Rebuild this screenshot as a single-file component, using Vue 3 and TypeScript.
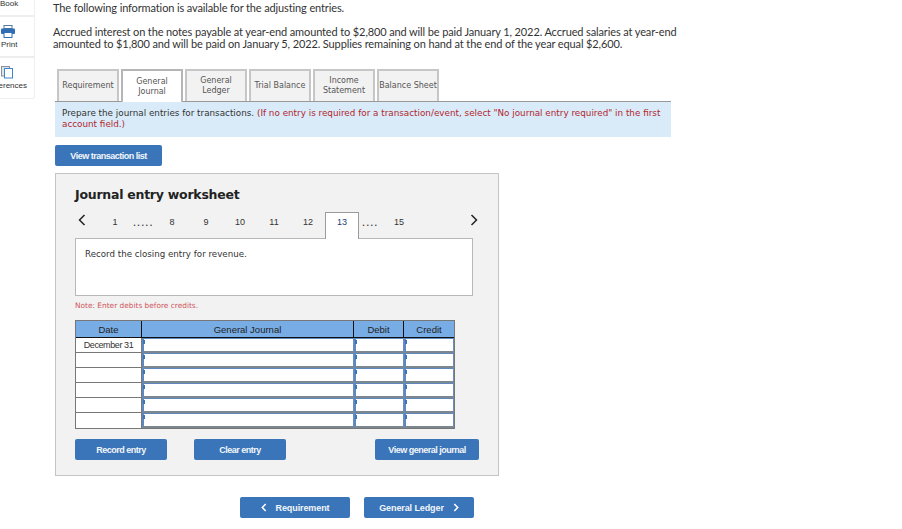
<script setup lang="ts">
const tabs = [
  { label: 'Requirement', active: false },
  { label: 'General Journal', active: true },
  { label: 'General Ledger', active: false },
  { label: 'Trial Balance', active: false },
  { label: 'Income Statement', active: false },
  { label: 'Balance Sheet', active: false },
]
const rows = ['December 31', '', '', '', '', '']
</script>

<template>
  <div class="page">
    <aside class="side">
      <div class="card book"><span class="clip">Book</span></div>
      <div class="card">
        <svg width="14" height="13" viewBox="0 0 14 13" class="ico">
          <rect x="3" y="0.5" width="8" height="3" fill="#fff" stroke="#55789f" />
          <rect x="0" y="3.5" width="14" height="5.5" rx="1" fill="#2f6db5" />
          <rect x="3" y="7.5" width="8" height="5" fill="#fff" stroke="#2f6db5" />
        </svg>
        <span>Print</span>
      </div>
      <div class="card refs">
        <svg width="13" height="13" viewBox="0 0 13 13" class="ico">
          <rect x="0.5" y="0.5" width="8" height="9.5" fill="#dfe4ea" stroke="#8a9099" />
          <rect x="3.5" y="2.5" width="8" height="9.5" fill="#fff" stroke="#3f83c9" />
        </svg>
        <span class="clip right">References</span>
      </div>
    </aside>

    <main class="main">
      <p class="intro first">The following information is available for the adjusting entries.</p>
      <p class="intro">Accrued interest on the notes payable at year-end amounted to $2,800 and will be paid January 1, 2022. Accrued salaries at year-end amounted to $1,800 and will be paid on January 5, 2022. Supplies remaining on hand at the end of the year equal $2,600.</p>

      <div class="tabs">
        <div v-for="t in tabs" :key="t.label" class="tab" :class="{ active: t.active }">{{ t.label }}</div>
      </div>
      <div class="notice">
        Prepare the journal entries for transactions. <span class="red">(If no entry is required for a transaction/event, select "No journal entry required" in the first account field.)</span>
      </div>
      <button class="btn list">View transaction list</button>

      <section class="sheet">
        <h2>Journal entry worksheet</h2>
        <div class="pager">
          <svg class="chev" width="8" height="12" viewBox="0 0 8 12"><path d="M6.5 1 1.5 6l5 5" fill="none" stroke="#222" stroke-width="1.5" /></svg>
          <span class="pg first-pg">1</span><span class="dots">.....</span>
          <span class="pg">8</span><span class="pg">9</span><span class="pg">10</span><span class="pg">11</span><span class="pg">12</span>
          <span class="pg cur">13</span><span class="dots">....</span><span class="pg">15</span>
          <svg class="chev end" width="8" height="12" viewBox="0 0 8 12"><path d="M1.5 1 6.5 6l-5 5" fill="none" stroke="#222" stroke-width="1.5" /></svg>
        </div>
        <div class="task">Record the closing entry for revenue.</div>
        <p class="note">Note: Enter debits before credits.</p>

        <table class="grid">
          <thead>
            <tr><th class="c1">Date</th><th class="c2">General Journal</th><th class="c3">Debit</th><th class="c4">Credit</th></tr>
          </thead>
          <tbody>
            <tr v-for="(d, i) in rows" :key="i">
              <td class="date">{{ d }}</td>
              <td class="in"><i></i></td>
              <td class="in"><i></i></td>
              <td class="in"><i></i></td>
            </tr>
          </tbody>
        </table>

        <div class="actions">
          <button class="btn rec">Record entry</button>
          <button class="btn clr">Clear entry</button>
          <button class="btn gen">View general journal</button>
        </div>
      </section>

      <div class="nav">
        <button class="btn nv">
          <svg width="6" height="9" viewBox="0 0 6 9"><path d="M4.7 1 1.3 4.5l3.4 3.5" fill="none" stroke="#fff" stroke-width="1.5" /></svg>
          Requirement
        </button>
        <button class="btn nv">
          General Ledger
          <svg width="6" height="9" viewBox="0 0 6 9"><path d="M1.3 1l3.4 3.5L1.3 8" fill="none" stroke="#fff" stroke-width="1.5" /></svg>
        </button>
      </div>
    </main>
  </div>
</template>

<style>
html, body { margin: 0; background: #fff; overflow: hidden; }
</style>

<style scoped>
.page { display: flex; width: 902px; height: 529px; overflow: hidden; font-family: "DejaVu Sans", sans-serif; color: #222; }
.side { width: 35px; flex: none; margin-right: 18px; }
.card { box-sizing: border-box; width: 35px; height: 41px; border: 1px solid #eee; border-left: 0; display: flex; flex-direction: column; align-items: flex-start; padding: 8px 0 0 1px; font: 8px "Liberation Sans", sans-serif; color: #333; overflow: hidden; }
.card.book { height: 17px; padding: 0 0 7px; margin-top: -1px; justify-content: flex-end; }
.card.refs { height: 42px; border-radius: 0 0 3px 0; padding-top: 8px; }
.ico { flex: none; margin-bottom: 2px; }
.refs .ico { margin-bottom: 2px; }
.clip { white-space: nowrap; }
.right { align-self: flex-end; margin-right: 7px; }
.main { width: 800px; flex: none; }
.intro { width: 630px; margin: 0; font: 11px/12px Lato, sans-serif; letter-spacing: -0.125px; color: #333; }
.intro.first { margin: 2px 0 12px; }
.tabs { display: flex; gap: 2px; margin: 19px 0 0 4px; height: 32px; }
.tab { box-sizing: border-box; width: 62px; height: 32px; display: flex; align-items: center; justify-content: center; text-align: center; font-size: 8px; line-height: 10px; color: #555; background: #f2f2f2; border: 2px solid #c6c6c6; border-bottom: 0; padding: 0; }
.tab.active { background: #fff; border-color: #b5b5b5; height: 33px; position: relative; z-index: 1; }
.notice { box-sizing: border-box; width: 616px; height: 36px; margin: 0 0 0 2px; padding: 6px 7px 0; background: #d9ebf9; border-top: 1px solid #999; font-size: 8.8px; line-height: 11px; color: #333; }
.red { color: #b3262e; }
.btn { display: block; box-sizing: border-box; height: 21px; border: 0; border-radius: 2px; background: #3a75b9; color: #f2f5fa; font: bold 9px "Liberation Sans", sans-serif; letter-spacing: -0.5px; padding: 0; text-align: center; }
.list { width: 107px; margin: 8px 0 7px 2px; }
.sheet { box-sizing: border-box; width: 444px; height: 303px; margin-left: 2px; padding: 12px 19px 0; background: #f2f2f2; border: 1px solid #c4c4c4; }
h2 { margin: 0; font-size: 12.5px; letter-spacing: -0.25px; line-height: 18px; font-weight: bold; color: #222; font-family: "DejaVu Sans", sans-serif; }
.pager { display: flex; align-items: flex-end; height: 26px; margin-top: 8px; font: 9px "Liberation Sans", sans-serif; color: #333; position: relative; z-index: 1; }
.chev { position: absolute; left: 3px; top: 2px; }
.chev.end { left: auto; right: 1px; }
.pg { box-sizing: border-box; width: 34px; height: 26px; display: flex; align-items: center; justify-content: center; padding-bottom: 7px; }
.first-pg { margin-left: 23px; }
.dots { width: 23px; height: 26px; display: flex; align-items: center; justify-content: center; font-weight: bold; letter-spacing: 1.6px; font-size: 9px; color: #444; padding-bottom: 5px; box-sizing: border-box; }
.cur { background: #fff; border: 1px solid #9b9b9b; border-bottom: 0; color: #1d3f7a; height: 27px; margin-bottom: -1px; padding-bottom: 8px; }
.task { box-sizing: border-box; width: 398px; height: 58px; padding: 9px 9px 0; background: #fff; border: 1px solid #b8b8b8; font-size: 8.7px; line-height: 12px; color: #333; }
.note { margin: 5px 0 0; height: 12px; font-size: 7.4px; line-height: 10px; color: #d0525a; }
.grid { width: 379px; margin-top: 7px; table-layout: fixed; border-collapse: separate; border-spacing: 0; font: 9.5px "Liberation Sans", sans-serif; border: 1px solid #777; }
.c1 { width: 66px; }
.c2 { width: 212px; }
.c3 { width: 50px; }
.c4 { width: 50px; }
th { box-sizing: border-box; height: 17px; padding: 0; background: #77ace5; font-weight: normal; color: #222; border-right: 1px solid #111; border-bottom: 1px solid #111; }
th:last-child { border-right: 0; }
td { height: 15px; padding: 0; box-sizing: border-box; }
.date { text-align: center; background: #fff; border-bottom: 1px solid #777; border-right: 1px solid #777; color: #333; font-size: 9px; letter-spacing: -0.4px; line-height: 13px; }
tr:last-child .date { border-bottom: 0; }
.in { position: relative; background: #fff; border-left: 2px solid #5f88bf; border-right: 1px solid #6b8fc0; border-top: 1px solid #5f88bf; border-bottom: 2px solid #7d8790; }
.in i { position: absolute; left: -1px; top: 1px; width: 2px; height: 4px; background: #3a75b9; }
.actions { display: flex; margin-top: 10px; }
.rec, .clr { width: 92px; margin-right: 27px; }
.gen { width: 104px; margin-left: auto; }
.nav { display: flex; gap: 14px; margin: 21px 0 0 187px; }
.nv { width: 110px; display: flex; align-items: center; justify-content: center; gap: 9px; font-size: 9px; letter-spacing: -0.1px; }
</style>
